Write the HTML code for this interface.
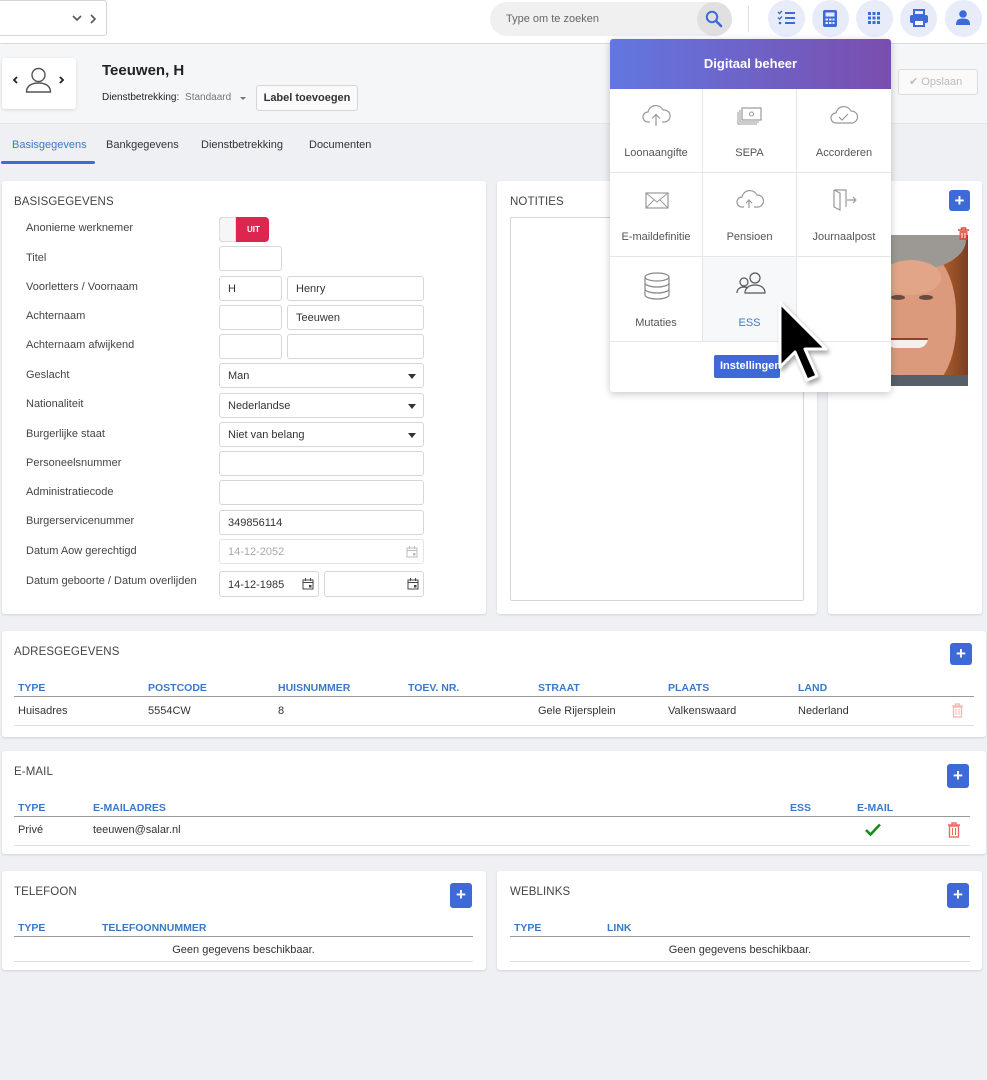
<!DOCTYPE html>
<html><head><meta charset="utf-8"><style>
*{box-sizing:border-box;margin:0;padding:0}
body{width:987px;height:1080px;background:#eef0f3;font-family:"Liberation Sans",sans-serif;font-size:11px;color:#333;position:relative;overflow:hidden}
.a{position:absolute}
.card{position:absolute;background:#fff;border-radius:3px;box-shadow:0 1px 2px rgba(0,0,0,.12)}
.ttl{position:absolute;font-size:11.5px;color:#444;letter-spacing:.1px}
.lbl{position:absolute;left:26px;font-size:11px;color:#444}
.in{position:absolute;height:25px;border:1px solid #d3d6da;border-radius:3px;background:#fff;font-size:11px;padding:6px 8px;color:#333}
.sel::after{content:"";position:absolute;right:7px;top:10px;border:4px solid transparent;border-top:5px solid #333;border-bottom:0}
.th{position:absolute;font-family:"Liberation Sans Narrow","Liberation Sans",sans-serif;font-weight:bold;font-size:10.5px;color:#3a79c9}
.td{position:absolute;font-size:11px;color:#333}
.hl{position:absolute;height:1px;background:#999}
.hl2{position:absolute;height:1px;background:#ddd}
.plus{position:absolute;width:22px;height:22px;background:#3d6ad6;border-radius:3px;color:#fff;font-weight:bold;font-size:17px;line-height:21px;text-align:center}
.circ{position:absolute;top:0;width:37px;height:37px;border-radius:50%;background:#e8ecf9}
.cell{position:absolute;width:93px;height:84px;border-right:1px solid #e6e6e6;border-bottom:1px solid #e6e6e6;text-align:center;font-size:11px;color:#555}
.cell span{position:absolute;left:0;right:0;top:58px}
.cell svg{position:absolute;left:32px;top:14px}
</style></head><body>

<div class="a" style="left:0;top:0;width:987px;height:43px;background:#fff;box-shadow:0 1px 3px rgba(0,0,0,.15)"></div>
<div class="a" style="left:-4px;top:0;width:111px;height:36px;border:1px solid #d5d5d5;border-radius:3px;background:#fff"></div>
<svg class="a" style="left:72px;top:14px" width="30" height="10"><path d="M1 2l4 4 4-4" stroke="#555" stroke-width="1.6" fill="none"/><path d="M19 1l4 4-4 4" stroke="#555" stroke-width="1.6" fill="none"/></svg>
<div class="a" style="left:490px;top:2px;width:242px;height:34px;border-radius:17px;background:#f0f0f0"></div>
<div class="a" style="left:506px;top:13px;font-size:11px;color:#666">Type om te zoeken</div>
<div class="a" style="left:697px;top:2px;width:35px;height:34px;border-radius:50%;background:#e0e0e0"></div>
<svg class="a" style="left:705px;top:10px" width="18" height="18"><circle cx="7" cy="7" r="5.2" stroke="#3d6ad6" stroke-width="2" fill="none"/><path d="M11 11l5 5" stroke="#3d6ad6" stroke-width="2.6" stroke-linecap="round"/></svg>
<div class="a" style="left:748px;top:6px;width:1px;height:26px;background:#ddd"></div>
<div class="circ" style="left:768px"></div><div class="circ" style="left:812px"></div><div class="circ" style="left:856px"></div><div class="circ" style="left:900px"></div><div class="circ" style="left:945px"></div>
<svg class="a" style="left:777px;top:10px" width="20" height="16"><path d="M1 2l1.5 1.5L5 1M1 7.5l1.5 1.5L5 6.5" stroke="#3d6ad6" stroke-width="1.4" fill="none"/><circle cx="3" cy="13" r="1.3" fill="#3d6ad6"/><path d="M8 3h10M8 8h10M8 13h10" stroke="#3d6ad6" stroke-width="2"/></svg>
<svg class="a" style="left:822px;top:9px" width="16" height="19"><rect x="1" y="1" width="14" height="17" rx="2" fill="#3d6ad6"/><rect x="3.5" y="3.5" width="9" height="4" fill="#e8ecf9"/><g fill="#e8ecf9"><rect x="3.5" y="9.5" width="2.5" height="2"/><rect x="7" y="9.5" width="2.5" height="2"/><rect x="10.5" y="9.5" width="2" height="2"/><rect x="3.5" y="13" width="2.5" height="2"/><rect x="7" y="13" width="2.5" height="2"/><rect x="10.5" y="13" width="2" height="2"/></g></svg>
<svg class="a" style="left:868px;top:12px" width="12" height="12"><g fill="#3d6ad6"><rect x="0" y="0" width="3" height="3"/><rect x="4.5" y="0" width="3" height="3"/><rect x="9" y="0" width="3" height="3"/><rect x="0" y="4.5" width="3" height="3"/><rect x="4.5" y="4.5" width="3" height="3"/><rect x="9" y="4.5" width="3" height="3"/><rect x="0" y="9" width="3" height="3"/><rect x="4.5" y="9" width="3" height="3"/><rect x="9" y="9" width="3" height="3"/></g></svg>
<svg class="a" style="left:909px;top:9px" width="20" height="19"><rect x="5" y="1" width="10" height="5" fill="none" stroke="#3d6ad6" stroke-width="2"/><rect x="1" y="6" width="18" height="8" rx="2" fill="#3d6ad6"/><rect x="5" y="11" width="10" height="6" fill="#fff" stroke="#3d6ad6" stroke-width="2"/></svg>
<svg class="a" style="left:956px;top:10px" width="14" height="16"><circle cx="7" cy="4" r="3.8" fill="#3d6ad6"/><path d="M0 15c0-5 2-6.5 7-6.5s7 1.5 7 6.5z" fill="#3d6ad6"/></svg>

<div class="a" style="left:0;top:44px;width:987px;height:80px;background:#f5f6f8;border-bottom:1px solid #e4e6e9"></div>
<div class="a" style="left:2px;top:58px;width:74px;height:51px;background:#fff;border-radius:3px;box-shadow:0 1px 3px rgba(0,0,0,.12)"></div>
<svg class="a" style="left:12px;top:66px" width="54" height="30"><path d="M5 11l-3 3 3 3" stroke="#222" stroke-width="1.8" fill="none"/><path d="M48 11l3 3-3 3" stroke="#222" stroke-width="1.8" fill="none"/><circle cx="26.5" cy="9" r="6.5" stroke="#555" stroke-width="1.4" fill="none"/><path d="M14.5 26c0-6 5-9 12-9s12 3 12 9z" stroke="#555" stroke-width="1.4" fill="none"/></svg>
<div class="a" style="left:102px;top:62px;font-size:15px;font-weight:bold;color:#222">Teeuwen, H</div>
<div class="a" style="left:102px;top:92px;font-size:10px;color:#222">Dienstbetrekking: <span style="color:#777;margin-left:3px">Standaard</span></div>
<svg class="a" style="left:239px;top:96px" width="8" height="5"><path d="M1 1h6L4 4z" fill="#777"/></svg>
<div class="a" style="left:256px;top:85px;width:102px;height:26px;border:1px solid #d3d6da;border-radius:3px;background:#fafafa;font-size:11px;font-weight:bold;color:#333;text-align:center;line-height:24px">Label toevoegen</div>
<div class="a" style="left:898px;top:69px;width:80px;height:26px;border:1px solid #dcdcdc;border-radius:3px;background:#fafafa;font-size:11px;color:#bbb;line-height:24px;padding-left:10px">✔ Opslaan</div>

<div class="a" style="left:12px;top:139px;font-size:11px;color:#3a79c9">Basisgegevens</div>
<div class="a" style="left:106px;top:139px;font-size:11px;color:#333">Bankgegevens</div>
<div class="a" style="left:201px;top:139px;font-size:11px;color:#333">Dienstbetrekking</div>
<div class="a" style="left:309px;top:139px;font-size:11px;color:#333">Documenten</div>
<div class="a" style="left:1px;top:161px;width:94px;height:3px;border-radius:2px;background:#3d6ad6"></div>

<div class="card" style="left:2px;top:181px;width:484px;height:433px"></div>
<div class="ttl" style="left:14px;top:196px">BASISGEGEVENS</div>
<div class="lbl" style="top:222px">Anonieme werknemer</div>
<div class="a" style="left:219px;top:217px;width:50px;height:25px;border-radius:4px;background:#dc2650;color:#fff;font-size:8px;font-weight:bold;line-height:25px;padding-left:28px">UIT</div>
<div class="a" style="left:219px;top:217px;width:17px;height:25px;border-radius:4px 0 0 4px;background:#f6f6f6;border:1px solid #ddd"></div>
<div class="lbl" style="top:252px">Titel</div><div class="in" style="left:219px;top:246px;width:63px"></div>
<div class="lbl" style="top:281px">Voorletters / Voornaam</div><div class="in" style="left:219px;top:276px;width:63px">H</div><div class="in" style="left:287px;top:276px;width:137px">Henry</div>
<div class="lbl" style="top:310px">Achternaam</div><div class="in" style="left:219px;top:305px;width:63px"></div><div class="in" style="left:287px;top:305px;width:137px">Teeuwen</div>
<div class="lbl" style="top:339px">Achternaam afwijkend</div><div class="in" style="left:219px;top:334px;width:63px"></div><div class="in" style="left:287px;top:334px;width:137px"></div>
<div class="lbl" style="top:369px">Geslacht</div><div class="in sel" style="left:219px;top:363px;width:205px">Man</div>
<div class="lbl" style="top:398px">Nationaliteit</div><div class="in sel" style="left:219px;top:393px;width:205px">Nederlandse</div>
<div class="lbl" style="top:428px">Burgerlijke staat</div><div class="in sel" style="left:219px;top:422px;width:205px">Niet van belang</div>
<div class="lbl" style="top:457px">Personeelsnummer</div><div class="in" style="left:219px;top:451px;width:205px"></div>
<div class="lbl" style="top:486px">Administratiecode</div><div class="in" style="left:219px;top:480px;width:205px"></div>
<div class="lbl" style="top:515px">Burgerservicenummer</div><div class="in" style="left:219px;top:510px;width:205px">349856114</div>
<div class="lbl" style="top:545px">Datum Aow gerechtigd</div><div class="in" style="left:219px;top:539px;width:205px;color:#aaa;border-color:#e4e4e4">14-12-2052</div>
<div class="lbl" style="top:575px">Datum geboorte / Datum overlijden</div><div class="in" style="left:219px;top:571px;width:100px;height:26px;padding-top:7px">14-12-1985</div><div class="in" style="left:324px;top:571px;width:100px;height:26px"></div>
<svg class="a" style="left:406px;top:546px" width="12" height="12"><rect x="1" y="2" width="10" height="9" fill="none" stroke="#bbb"/><path d="M1 4.5h10M3.5 0v3M8.5 0v3" stroke="#bbb"/><rect x="7" y="7" width="2.5" height="2.5" fill="#bbb"/></svg>
<svg class="a" style="left:302px;top:578px" width="12" height="12"><rect x="1" y="2" width="10" height="9" fill="none" stroke="#444"/><path d="M1 4.5h10M3.5 0v3M8.5 0v3" stroke="#444"/><rect x="7" y="7" width="2.5" height="2.5" fill="#444"/></svg>
<svg class="a" style="left:407px;top:578px" width="12" height="12"><rect x="1" y="2" width="10" height="9" fill="none" stroke="#444"/><path d="M1 4.5h10M3.5 0v3M8.5 0v3" stroke="#444"/><rect x="7" y="7" width="2.5" height="2.5" fill="#444"/></svg>

<div class="card" style="left:497px;top:181px;width:320px;height:433px"></div>
<div class="ttl" style="left:510px;top:196px">NOTITIES</div>
<div class="a" style="left:510px;top:217px;width:294px;height:384px;border:1px solid #d3d6da;border-radius:2px"></div>

<div class="card" style="left:828px;top:181px;width:154px;height:433px"></div>
<div class="plus" style="left:949px;top:190px;width:21px;height:21px">+</div>
<div class="a" style="left:891px;top:235px;width:77px;height:151px;background:linear-gradient(90deg,#6a3a22,#a85a2c 70%,#7a3e20);overflow:hidden">
 <div class="a" style="left:-30px;top:10px;width:95px;height:150px;border-radius:45%;background:#dc9a7c"></div>
 <div class="a" style="left:-30px;top:-25px;width:105px;height:60px;border-radius:50%;background:#9c9893"></div>
 <div class="a" style="left:-10px;top:25px;width:60px;height:35px;border-radius:50%;background:#e2a588"></div>
 <div class="a" style="left:-5px;top:103px;width:42px;height:10px;border-radius:0 0 20px 20px;background:#f4f0ec;border-top:2px solid #9a3a30"></div>
 <div class="a" style="left:0;top:60px;width:14px;height:5px;border-radius:50%;background:#6a4a40"></div>
 <div class="a" style="left:28px;top:60px;width:14px;height:5px;border-radius:50%;background:#6a4a40"></div>
 <div class="a" style="left:-10px;top:140px;width:90px;height:20px;background:#55606a"></div>
</div>
<svg class="a" style="left:957px;top:227px" width="13" height="14"><path d="M1 3h11M4.5 3V1h4v2" stroke="#e04a3a" stroke-width="1.4" fill="none"/><rect x="2.5" y="4" width="8" height="9" fill="#e04a3a" opacity=".85"/><path d="M5 6v5M8 6v5" stroke="#fff"/></svg>

<div class="card" style="left:2px;top:631px;width:984px;height:106px"></div>
<div class="ttl" style="left:14px;top:646px">ADRESGEGEVENS</div>
<div class="plus" style="left:950px;top:643px">+</div>
<div class="th" style="left:18px;top:682px">TYPE</div><div class="th" style="left:148px;top:682px">POSTCODE</div><div class="th" style="left:278px;top:682px">HUISNUMMER</div><div class="th" style="left:408px;top:682px">TOEV. NR.</div><div class="th" style="left:538px;top:682px">STRAAT</div><div class="th" style="left:668px;top:682px">PLAATS</div><div class="th" style="left:798px;top:682px">LAND</div>
<div class="hl" style="left:14px;top:696px;width:960px"></div>
<div class="td" style="left:18px;top:705px">Huisadres</div><div class="td" style="left:148px;top:705px">5554CW</div><div class="td" style="left:278px;top:705px">8</div><div class="td" style="left:538px;top:705px">Gele Rijersplein</div><div class="td" style="left:668px;top:705px">Valkenswaard</div><div class="td" style="left:798px;top:705px">Nederland</div>
<svg class="a" style="left:951px;top:703px" width="13" height="15"><path d="M1 3h11M4.5 3V1h4v2" stroke="#f3b5b0" stroke-width="1.3" fill="none"/><rect x="2.5" y="4" width="8" height="10" fill="none" stroke="#f3b5b0" stroke-width="1.3"/><path d="M5 6v6M8 6v6" stroke="#f3b5b0"/></svg>
<div class="hl2" style="left:14px;top:725px;width:960px"></div>

<div class="card" style="left:2px;top:751px;width:984px;height:103px"></div>
<div class="ttl" style="left:14px;top:766px">E-MAIL</div>
<div class="plus" style="left:947px;top:764px;height:24px;line-height:23px">+</div>
<div class="th" style="left:18px;top:802px">TYPE</div><div class="th" style="left:93px;top:802px">E-MAILADRES</div><div class="th" style="left:790px;top:802px">ESS</div><div class="th" style="left:857px;top:802px">E-MAIL</div>
<div class="hl" style="left:14px;top:816px;width:956px"></div>
<div class="td" style="left:18px;top:824px">Privé</div><div class="td" style="left:93px;top:824px">teeuwen@salar.nl</div>
<svg class="a" style="left:865px;top:823px" width="16" height="13"><path d="M1 7l4.5 4.5L15 1.5" stroke="#1a8a1a" stroke-width="2.6" fill="none"/></svg>
<svg class="a" style="left:947px;top:822px" width="14" height="16"><path d="M1 3h12M5 3V1h4v2" stroke="#ef6a60" stroke-width="1.4" fill="none"/><rect x="2.5" y="4" width="9" height="11" fill="none" stroke="#ef6a60" stroke-width="1.4"/><path d="M5.5 6v7M8.5 6v7" stroke="#ef6a60"/></svg>
<div class="hl2" style="left:14px;top:845px;width:956px"></div>

<div class="card" style="left:2px;top:871px;width:484px;height:99px"></div>
<div class="ttl" style="left:14px;top:886px">TELEFOON</div>
<div class="plus" style="left:450px;top:883px;height:25px;line-height:24px">+</div>
<div class="th" style="left:18px;top:922px">TYPE</div><div class="th" style="left:102px;top:922px">TELEFOONNUMMER</div>
<div class="hl" style="left:14px;top:936px;width:459px"></div>
<div class="td" style="left:14px;width:459px;top:944px;text-align:center">Geen gegevens beschikbaar.</div>
<div class="hl2" style="left:14px;top:961px;width:459px"></div>

<div class="card" style="left:497px;top:871px;width:485px;height:99px"></div>
<div class="ttl" style="left:510px;top:886px">WEBLINKS</div>
<div class="plus" style="left:947px;top:883px;height:25px;line-height:24px">+</div>
<div class="th" style="left:514px;top:922px">TYPE</div><div class="th" style="left:607px;top:922px">LINK</div>
<div class="hl" style="left:510px;top:936px;width:460px"></div>
<div class="td" style="left:510px;width:460px;top:944px;text-align:center">Geen gegevens beschikbaar.</div>
<div class="hl2" style="left:510px;top:961px;width:460px"></div>

<div class="a" style="left:610px;top:39px;width:281px;height:353px;background:#fff;border-radius:3px;box-shadow:0 2px 8px rgba(0,0,0,.22);overflow:hidden">
 <div class="a" style="left:0;top:0;width:281px;height:50px;background:linear-gradient(90deg,#6277e0,#7a4eae);color:#fff;font-weight:bold;font-size:13px;text-align:center;line-height:50px">Digitaal beheer</div>
 <div class="cell" style="left:0;top:50px"><svg width="30" height="26"><path d="M8 19H6a5 5 0 0 1 0-10 8 8 0 0 1 15-2 6 6 0 0 1 2 12h-3M14 23V12M10 15.5l4-4 4 4" stroke="#999" stroke-width="1.2" fill="none"/></svg><span>Loonaangifte</span></div>
 <div class="cell" style="left:93px;top:50px;width:94px"><svg width="30" height="26"><rect x="7" y="5" width="19" height="12" fill="#fff" stroke="#999" stroke-width="1.2"/><circle cx="16.5" cy="11" r="2" fill="none" stroke="#999"/><path d="M5 7v12h19M3 9v12h19" stroke="#999" fill="none"/></svg><span>SEPA</span></div>
 <div class="cell" style="left:187px;top:50px;width:94px;border-right:0"><svg width="30" height="26"><path d="M7 20a5 5 0 0 1 0-10 8 8 0 0 1 15-2 6 6 0 0 1 1 12H7M10 14l3 3 6-6" stroke="#999" stroke-width="1.2" fill="none"/></svg><span>Accorderen</span></div>
 <div class="cell" style="left:0;top:134px"><svg width="30" height="26"><rect x="4" y="6" width="22" height="15" fill="none" stroke="#999" stroke-width="1.2"/><path d="M4 6l11 9 11-9M4 21l8-8M26 21l-8-8" stroke="#999" fill="none"/></svg><span>E-maildefinitie</span></div>
 <div class="cell" style="left:93px;top:134px;width:94px"><svg width="30" height="26"><path d="M9 20H7a5 5 0 0 1 0-10 8 8 0 0 1 15-2 6 6 0 0 1 1 12h-4M14 21v-7M11 16l3-3 3 3" stroke="#999" stroke-width="1.2" fill="none"/></svg><span>Pensioen</span></div>
 <div class="cell" style="left:187px;top:134px;width:94px;border-right:0"><svg width="30" height="26"><path d="M5 3h12v17M5 3v17l6 3V6L5 3M18 13h9M24 10l3 3-3 3" stroke="#999" stroke-width="1.2" fill="none"/></svg><span>Journaalpost</span></div>
 <div class="cell" style="left:0;top:218px;height:85px"><svg width="30" height="30"><ellipse cx="15" cy="6" rx="12" ry="4" fill="none" stroke="#888" stroke-width="1.2"/><path d="M3 6v18c0 2 5 4 12 4s12-2 12-4V6M3 12c0 2 5 4 12 4s12-2 12-4M3 18c0 2 5 4 12 4s12-2 12-4" stroke="#888" stroke-width="1.2" fill="none"/></svg><span style="top:60px">Mutaties</span></div>
 <div class="cell" style="left:93px;top:218px;width:94px;height:85px;background:#f7f8fa"><svg width="32" height="26"><circle cx="9" cy="11" r="4" fill="none" stroke="#555" stroke-width="1.2"/><circle cx="20" cy="7" r="5" fill="none" stroke="#555" stroke-width="1.2"/><path d="M2 22c0-4 3-6 7-6 2 0 3 .5 4 1M10 22c0-5 4-8 10-8s10 3 10 8z" stroke="#555" stroke-width="1.2" fill="none"/></svg><span style="top:60px;color:#3a79c9">ESS</span></div>
 <div class="cell" style="left:187px;top:218px;width:94px;height:85px;border-right:0"></div>
 <div class="a" style="left:104px;top:316px;width:66px;height:23px;background:#3d6ad6;border-radius:2px;color:#fff;font-weight:bold;font-size:11px;line-height:23px;padding-left:6px;white-space:nowrap;overflow:hidden">Instellingen</div>
</div>
<svg class="a" style="left:774px;top:298px" width="60" height="95"><path d="M6 5v64l15-15 12 28 10-4-12-27h21z" fill="#000" stroke="#fff" stroke-width="3" stroke-linejoin="round" style="filter:drop-shadow(2px 3px 2px rgba(0,0,0,.35))"/></svg>
</body></html>
